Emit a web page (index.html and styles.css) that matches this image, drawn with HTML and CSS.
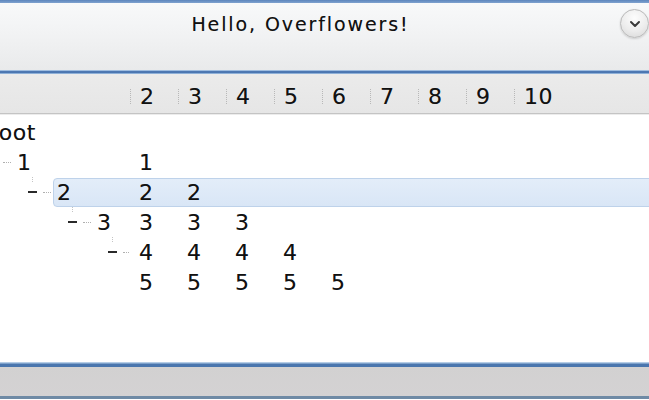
FILE: index.html
```html
<!DOCTYPE html>
<html>
<head>
<meta charset="utf-8">
<link rel="stylesheet" href="styles.css">
</head>
<body>
<div class="window">
  <div class="topline"></div>
  <div class="titlebar">
    <div class="title">Hello, Overflowers!</div>
    <div class="btn">
      <svg width="12" height="8" viewBox="0 0 12 8"><path d="M2 2 L6 6 L10 2" fill="none" stroke="#3a3a3a" stroke-width="2" stroke-linecap="round" stroke-linejoin="round"/></svg>
    </div>
  </div>
  <div class="midline"></div>
  <div class="header">
    <div class="hcell first"></div>
    <div class="hcell"><span>2</span></div>
    <div class="hcell"><span>3</span></div>
    <div class="hcell"><span>4</span></div>
    <div class="hcell"><span>5</span></div>
    <div class="hcell"><span>6</span></div>
    <div class="hcell"><span>7</span></div>
    <div class="hcell"><span>8</span></div>
    <div class="hcell"><span>9</span></div>
    <div class="hcell"><span>10</span></div>
  </div>
  <div class="tree">
    <div class="row">
      <div class="tcell"><div class="branch l0"><span class="label">Root</span></div></div>
    </div>
    <div class="row">
      <div class="tcell"><div class="branch l1"><span class="minus"></span><span class="dots"></span><span class="label">1</span></div></div>
      <div class="cell">1</div>
    </div>
    <div class="row selected">
      <div class="tcell"><div class="branch l2"><span class="minus vline"></span><span class="dots"></span><span class="label">2</span></div></div>
      <div class="cell">2</div><div class="cell">2</div>
    </div>
    <div class="row">
      <div class="tcell"><div class="branch l3"><span class="minus vline"></span><span class="dots"></span><span class="label">3</span></div></div>
      <div class="cell">3</div><div class="cell">3</div><div class="cell">3</div>
    </div>
    <div class="row">
      <div class="tcell"><div class="branch l4"><span class="minus vline"></span><span class="dots"></span></div></div>
      <div class="cell">4</div><div class="cell">4</div><div class="cell">4</div><div class="cell">4</div>
    </div>
    <div class="row">
      <div class="tcell"></div>
      <div class="cell">5</div><div class="cell">5</div><div class="cell">5</div><div class="cell">5</div><div class="cell">5</div>
    </div>
  </div>
  <div class="bottomline"></div>
  <div class="status"></div>
  <div class="footer"></div>
</div>
</body>
</html>
```

FILE: styles.css
```css
html, body {
  margin: 0;
  padding: 0;
}
body {
  width: 649px;
  height: 400px;
  overflow: hidden;
  background: #ffffff;
  font-family: "DejaVu Sans", "Liberation Sans", sans-serif;
  color: #111111;
}
.window {
  display: flex;
  flex-direction: column;
  width: 649px;
  height: 400px;
}
.topline {
  height: 3px;
  background: linear-gradient(#5d86bd, #7fa2cf);
  flex: none;
}
.titlebar {
  height: 67px;
  flex: none;
  display: flex;
  align-items: flex-start;
  background: linear-gradient(#f8f9fa, #f1f2f3 50%, #e9eaeb);
}
.title {
  flex: 1;
  text-align: center;
  font-size: 19px;
  letter-spacing: 1.9px;
  line-height: 24px;
  padding-top: 9px;
  color: #111111;
  text-shadow: 0 0 0.6px rgba(0,0,0,0.35);
}
.btn {
  width: 27px;
  height: 27px;
  margin-top: 6px;
  margin-right: 0;
  margin-left: 19px;
  border-radius: 50%;
  border: 1px solid #b9b9b9;
  background: radial-gradient(circle at 50% 30%, #fdfdfd, #ececec 55%, #d6d6d6);
  box-shadow: 0 1px 2px rgba(0,0,0,0.15);
  display: flex;
  align-items: center;
  justify-content: center;
  flex: none;
}
.midline {
  height: 4px;
  flex: none;
  background: linear-gradient(#9fbde0 0, #9fbde0 1px, #4f7ab4 1px, #4a76b1 3px, #8eb0d8 3px);
}
.header {
  height: 40px;
  flex: none;
  display: flex;
  align-items: center;
  padding-top: 5px;
  box-sizing: border-box;
  background: linear-gradient(#ebebeb, #e6e6e6);
  border-bottom: 1px solid #c4c4c4;
  box-shadow: 0 1px 0 #ececec;
  font-size: 22px;
  letter-spacing: 0.5px;
  text-shadow: 0 0 0.6px rgba(0,0,0,0.35);
}
.hcell {
  width: 48px;
  flex: none;
  display: flex;
  align-items: center;
  height: 24px;
}
.hcell.first {
  width: 130px;
}
.hcell::before {
  content: "";
  width: 0;
  height: 15px;
  border-left: 1px dotted #b8b8b8;
  margin-right: 9px;
}
.hcell.first::before {
  display: none;
}
.tree {
  height: 247px;
  flex: none;
  margin-top: 1px;
  padding-top: 2px;
  box-sizing: border-box;
  background: #ffffff;
  font-size: 22px;
  letter-spacing: 0.5px;
  overflow: hidden;
  text-shadow: 0 0 0.6px rgba(0,0,0,0.35);
}
.row {
  height: 30px;
  display: flex;
  align-items: center;
  position: relative;
}
.row.selected::before {
  content: "";
  position: absolute;
  left: 53px;
  right: -6px;
  top: 1px;
  bottom: 0;
  border: 1px solid #bed2ea;
  border-radius: 4px;
  background: linear-gradient(#e3edf9, #d9e6f6);
}
.tcell {
  width: 130px;
  height: 30px;
  flex: none;
  overflow: hidden;
  position: relative;
}
.branch {
  display: flex;
  align-items: center;
  height: 30px;
  white-space: nowrap;
}
.l0 { margin-left: -16px; }
.l1 { margin-left: -12px; }
.l2 { margin-left: 28px; }
.l3 { margin-left: 68px; }
.l4 { margin-left: 108px; }
.minus {
  width: 9px;
  height: 2px;
  background: #2a2a2a;
  margin-right: 6px;
  flex: none;
  position: relative;
}
.minus.vline::before {
  content: "";
  position: absolute;
  left: 4px;
  top: -14px;
  height: 5px;
  border-left: 1px dotted #c4c4c4;
}
.dots {
  width: 8px;
  height: 0;
  border-top: 1px dotted #b0b0b0;
  margin-right: 6px;
  flex: none;
}
.label {
  position: relative;
}
.cell {
  width: 48px;
  flex: none;
  padding-left: 9px;
  box-sizing: border-box;
  position: relative;
}
.bottomline {
  height: 5px;
  flex: none;
  background: linear-gradient(#b5cde6 0, #b5cde6 1px, #7ea1cb 1px, #7ea1cb 2px, #4a76ae 2px);
}
.status {
  height: 29px;
  flex: none;
  background: linear-gradient(#d2d1d1, #d4d2d3);
}
.footer {
  height: 3px;
  flex: none;
  background: #6f8aa5;
}
```
